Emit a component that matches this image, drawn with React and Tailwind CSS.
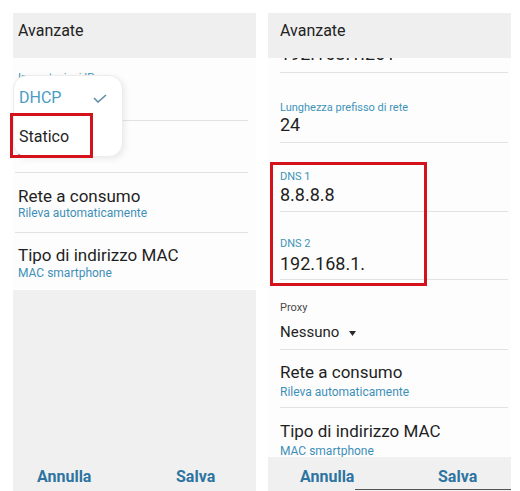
import React from "react";

const font = { fontFamily: "Roboto, 'Noto Sans', Arial, sans-serif" };

function Divider({ cls }) {
  return <div className={"h-px bg-[#e2e2e2] " + cls} />;
}

function Arrow() {
  return (
    <svg width="7" height="5" viewBox="0 0 7 5" className="ml-[10px] mt-[1px]">
      <path d="M0 0 L7 0 L3.5 5 Z" fill="#2a2a2a" />
    </svg>
  );
}

function LeftPanel() {
  return (
    <div className="relative w-[243px] flex flex-col h-[478px]">
      <div className="h-[45px] bg-[#efefef] pl-[5px] pt-[10px]">
        <div className="text-[16px] leading-none text-[#222]">Avanzate</div>
      </div>
      <div className="relative h-[232px] bg-[#fdfdfd] flex flex-col pl-[5px]">
        <div className="mt-[14px] text-[11px] leading-none text-[#3e94b8]">Impostazioni IP</div>
        <div className="mt-[6px] text-[15px] leading-none text-[#222]">DHCP</div>
        <Divider cls="mt-[16px] ml-[-3px] mr-[8px]" />
        <div className="mt-[7px] text-[11px] leading-none text-[#4a4a4a]">Proxy</div>
        <div className="mt-[6px] text-[15px] leading-none text-[#222]">Statico</div>
        <Divider cls="mt-[12px] ml-[-3px] mr-[8px]" />
        <div className="mt-[15px] text-[17px] leading-none text-[#1f1f1f]">Rete a consumo</div>
        <div className="mt-[2px] text-[12px] leading-none text-[#3e8fb8]">Rileva automaticamente</div>
        <Divider cls="mt-[13px] ml-[-3px] mr-[8px]" />
        <div className="mt-[14px] text-[17px] leading-none text-[#1f1f1f]">Tipo di indirizzo MAC</div>
        <div className="mt-[3px] text-[12px] leading-none text-[#3e8fb8]">MAC smartphone</div>

        <div className="absolute left-0 top-[17px] w-[110px] h-[82px] rounded-[14px] bg-white border border-[#ececec] shadow-[2px_2px_6px_rgba(0,0,0,0.08)] flex flex-col pl-[5px]">
          <div className="mt-[14px] flex items-center">
            <span className="w-[74px] text-[16px] leading-none text-[#4a9cc4]">DHCP</span>
            <svg width="14" height="9" viewBox="0 0 14 9">
              <path d="M1 4 L5 8 L13 1" fill="none" stroke="#5f8fa6" strokeWidth="1.6" />
            </svg>
          </div>
          <div className="mt-[23px] text-[16px] leading-none text-[#1f1f1f]">Statico</div>
        </div>
      </div>
      <div className="flex-1 bg-[#f0f0f0] flex items-end pb-[6px] pl-[24px]">
        <span className="w-[139px] text-[16px] leading-none font-bold text-[#2e74a0]">Annulla</span>
        <span className="text-[16px] leading-none font-bold text-[#2e74a0]">Salva</span>
      </div>
      <div className="absolute left-[-3px] top-[100px] w-[83px] h-[45px] border-[3px] border-[#d3121b]" />
    </div>
  );
}

function RightPanel() {
  return (
    <div className="relative w-[243px] flex flex-col h-[478px]">
      <div className="relative z-10 h-[45px] bg-[#efefef] pl-[12px] pt-[10px]">
        <div className="text-[16px] leading-none text-[#222]">Avanzate</div>
      </div>
      <div className="h-[399px] overflow-hidden bg-[#fdfdfd] flex flex-col pl-[12px]">
        <div className="mt-[-13px] text-[18px] leading-none text-[#1f1f1f]">192.168.1.201</div>
        <Divider cls="mt-[9px] mr-[3px]" />
        <div className="mt-[29px] text-[11px] leading-none text-[#3e94b8]">Lunghezza prefisso di rete</div>
        <div className="mt-[3px] text-[18px] leading-none text-[#1f1f1f]">24</div>
        <Divider cls="mt-[8px] mr-[3px]" />
        <div className="mt-[28px] text-[11px] leading-none text-[#3e94b8]">DNS 1</div>
        <div className="mt-[4px] text-[18px] leading-none text-[#1f1f1f]">8.8.8.8</div>
        <Divider cls="mt-[7px] mr-[3px]" />
        <div className="mt-[27px] text-[11px] leading-none text-[#3e94b8]">DNS 2</div>
        <div className="mt-[6px] text-[18px] leading-none text-[#1f1f1f]">192.168.1.</div>
        <Divider cls="mt-[6px] mr-[3px]" />
        <div className="mt-[22px] text-[11px] leading-none text-[#4a4a4a]">Proxy</div>
        <div className="mt-[12px] flex items-center">
          <span className="text-[15px] leading-none text-[#1f1f1f]">Nessuno</span>
          <Arrow />
        </div>
        <Divider cls="mt-[9px] mr-[3px]" />
        <div className="mt-[14px] text-[17px] leading-none text-[#1f1f1f]">Rete a consumo</div>
        <div className="mt-[5px] text-[12px] leading-none text-[#3e8fb8]">Rileva automaticamente</div>
        <Divider cls="mt-[9px] mr-[3px]" />
        <div className="mt-[15px] text-[17px] leading-none text-[#1f1f1f]">Tipo di indirizzo MAC</div>
        <div className="mt-[5px] text-[12px] leading-none text-[#3e8fb8]">MAC smartphone</div>
      </div>
      <div className="h-[34px] bg-[#f0f0f0] flex flex-col justify-between">
        <div className="flex pt-[12px] pl-[32px]">
          <span className="w-[138px] text-[16px] leading-none font-bold text-[#2e74a0]">Annulla</span>
          <span className="text-[16px] leading-none font-bold text-[#2e74a0]">Salva</span>
        </div>
        <div className="h-px ml-[87px] mb-[1px] bg-[#555]" />
      </div>
      <div className="absolute left-[2px] top-[149px] w-[157px] h-[124px] border-[3px] border-[#d3121b]" />
    </div>
  );
}

export default function App() {
  return (
    <div style={font} className="w-[520px] h-[491px] bg-white overflow-hidden flex gap-[12px] pl-[13px] pt-[13px]">
      <LeftPanel />
      <RightPanel />
    </div>
  );
}
